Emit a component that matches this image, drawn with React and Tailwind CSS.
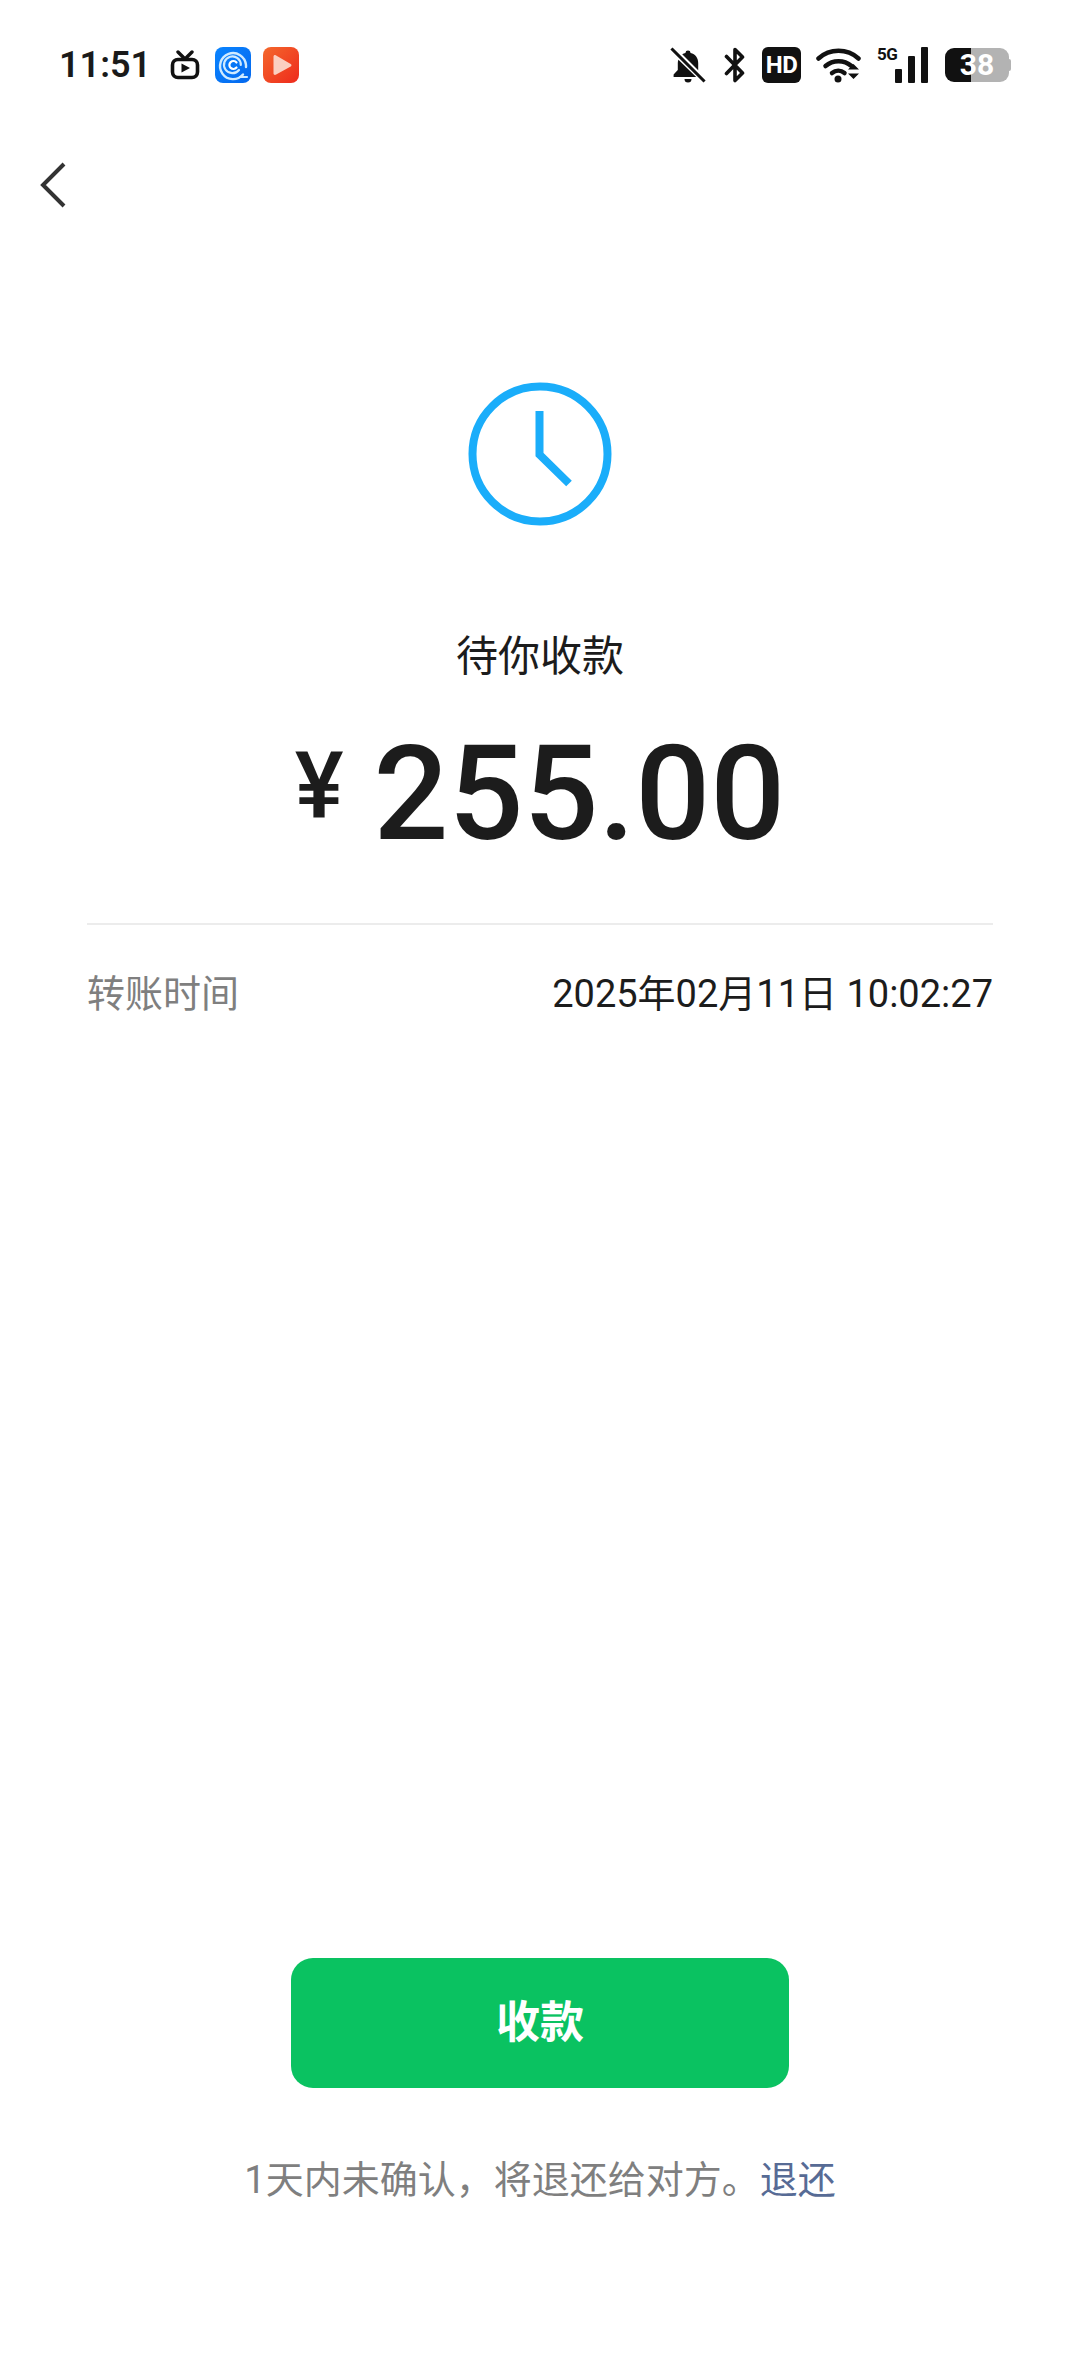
import React from "react";

function TvIcon() {
  return (
    <svg width="30" height="30" viewBox="0 0 30 30" className="ml-[32px]">
      <path d="M8 2l7 7 7-7" fill="none" stroke="#111" strokeWidth="3.4" strokeLinecap="round" strokeLinejoin="round" />
      <rect x="2.5" y="9.5" width="25" height="18" rx="5.5" fill="none" stroke="#111" strokeWidth="3.6" />
      <path d="M11.5 13.5v9l8.5-4.5z" fill="#111" />
    </svg>
  );
}

function BlueApp() {
  return (
    <svg width="36" height="36" viewBox="0 0 36 36" className="ml-[15px]">
      <defs>
        <linearGradient id="blueBg" x1="0" y1="0" x2="1" y2="1">
          <stop offset="0" stopColor="#0a84ff" />
          <stop offset="1" stopColor="#0468ee" />
        </linearGradient>
      </defs>
      <rect width="36" height="36" rx="8" fill="url(#blueBg)" />
      <path d="M28 27.5A13 13 0 1 1 31 18v2" fill="none" stroke="#cfeaff" strokeWidth="2.4" strokeLinecap="round" />
      <path d="M24 23a8.4 8.4 0 1 1 1.8-5" fill="none" stroke="#cfeaff" strokeWidth="2.2" strokeLinecap="round" />
      <path d="M21.5 15.5a4 4 0 1 0 0 5" fill="none" stroke="#fff" strokeWidth="2.2" strokeLinecap="round" />
      <path d="M25 30h7" stroke="#cfeaff" strokeWidth="2.2" strokeLinecap="round" />
    </svg>
  );
}

function RedApp() {
  return (
    <svg width="36" height="36" viewBox="0 0 36 36" className="ml-[12px]">
      <defs>
        <linearGradient id="redBg" x1="0" y1="0" x2="1" y2="1">
          <stop offset="0" stopColor="#f4682c" />
          <stop offset="1" stopColor="#ee2a1c" />
        </linearGradient>
      </defs>
      <rect width="36" height="36" rx="8" fill="url(#redBg)" />
      <path d="M10.5 9.5c0-1.2 1.2-1.9 2.2-1.3l15 8.8c1 .6 1 2 0 2.6l-15 8.2c-1 .5-2.2-.2-2.2-1.3z" fill="#fbcfc0" />
    </svg>
  );
}

function BellOff() {
  return (
    <svg width="36" height="36" viewBox="0 0 36 36">
      <path d="M18 3.5a2.6 2.6 0 0 1 2.6 2.4c4.8 1.2 7.6 5 7.6 10v7.4L12.2 7.3c1-.7 2.1-1.2 3.2-1.4A2.6 2.6 0 0 1 18 3.5z" fill="#111" />
      <path d="M8.4 12.8c-.4 1-.6 2-.6 3.1v7.2L3.6 27.6V30h22.6z" fill="#111" />
      <path d="M14.5 32h7a3.5 3.5 0 0 1-7 0z" fill="#111" />
      <path d="M2.5 2.5l31 31" stroke="#111" strokeWidth="3" strokeLinecap="square" />
    </svg>
  );
}

function Bluetooth() {
  return (
    <svg width="22" height="36" viewBox="0 0 22 36" className="ml-[18px]">
      <path d="M2.5 9.5l16 16.5-7.5 7.500V2.500l7.500 7.500L2.500 26.500" fill="none" stroke="#111" strokeWidth="3.600" strokeLinejoin="round" strokeLinecap="round" />
    </svg>
  );
}

function Wifi() {
  return (
    <svg width="46" height="36" viewBox="0 0 46 36" className="ml-[15px]">
      <path d="M2.500 11.500a30 30 0 0 1 40 0" fill="none" stroke="#111" strokeWidth="4.500" strokeLinecap="round" />
      <path d="M9.500 19a20 20 0 0 1 26 0" fill="none" stroke="#111" strokeWidth="4.500" strokeLinecap="round" />
      <path d="M16 26a10 10 0 0 1 12.500 0" fill="none" stroke="#111" strokeWidth="4.500" strokeLinecap="round" />
      <circle cx="22" cy="32" r="3.500" fill="#111" />
      <path d="M32 22.500h11l-5.500-5.500zM32 26.500h11l-5.500 5.500z" fill="#111" />
    </svg>
  );
}

function SignalBars() {
  return (
    <div className="relative ml-[15px] flex h-[36px] w-[51px] items-end justify-end gap-[6px]">
      <span className="absolute left-0 top-[-2px] font-['Roboto',sans-serif] text-[17px] leading-[18px] font-bold tracking-[-0.5px] text-[#111]">5G</span>
      <div className="h-[14px] w-[7px] rounded-[1px] bg-[#111]" />
      <div className="h-[27px] w-[7px] rounded-[1px] bg-[#111]" />
      <div className="h-[36px] w-[7px] rounded-[1px] bg-[#111]" />
    </div>
  );
}

function StatusBar() {
  return (
    <div className="flex h-[130px] items-center justify-between pl-[59px] pr-[69px]">
      <div className="flex items-center">
        <span className="w-[79px] text-[36px] leading-[44px] font-semibold text-[#1a1a1a]">11:51</span>
        <TvIcon />
        <BlueApp />
        <RedApp />
      </div>
      <div className="flex items-center">
        <BellOff />
        <Bluetooth />
        <div className="ml-[16px] flex h-[36px] w-[39px] items-center justify-center rounded-[6px] bg-[#111] text-[24px] leading-[36px] font-bold tracking-[-0.5px] text-white">HD</div>
        <Wifi />
        <SignalBars />
        <div className="ml-[17px] flex items-center">
          <div className="flex h-[34px] w-[64px] items-center justify-center rounded-[9px] bg-[linear-gradient(90deg,#111_40%,#b3b3b3_40%)] text-[30px] leading-[34px] font-bold text-white">38</div>
          <div className="h-[12px] w-[2px] rounded-r-[2px] bg-[#b3b3b3]" />
        </div>
      </div>
    </div>
  );
}

export default function App() {
  return (
    <div className="flex h-[2376px] w-[1080px] flex-col bg-white font-['Roboto','Noto_Sans_CJK_SC',sans-serif]">
      <StatusBar />

      {/* Back */}
      <div className="mt-[31px] h-[48px] pl-[38px]">
        <svg width="30" height="48" viewBox="0 0 30 48">
          <path d="M26 3L5 24l21 21" fill="none" stroke="#333" strokeWidth="4" />
        </svg>
      </div>

      {/* Status icon */}
      <div className="mt-[173px] flex justify-center">
        <svg width="144" height="144" viewBox="0 0 144 144" className="ml-[-1px]">
          <circle cx="72" cy="72" r="67.500" fill="none" stroke="#1aadfa" strokeWidth="8" />
          <path d="M71.500 29v43.500l29.500 29" fill="none" stroke="#1aadfa" strokeWidth="8" />
        </svg>
      </div>

      <p className="mt-[103px] text-center text-[42px] leading-[56px] text-[#1c1c1c]">待你收款</p>

      <div className="mt-[44px] flex h-[130px] items-start justify-center">
        <span className="mt-[8px] text-[92px] leading-[100px] font-medium text-[#1c1c1c]">¥</span>
        <span className="ml-[30px] text-[132px] leading-[130px] font-medium text-[#1c1c1c]">255.00</span>
      </div>

      <div className="mx-[87px] mt-[64px] h-[2px] bg-[#ececec]" />

      <div className="mx-[87px] mt-[43px] flex items-center justify-between text-[38px] leading-[52px]">
        <span className="text-[#7f7f7f]">转账时间</span>
        <span className="text-[#1c1c1c]">2025年02月11日 10:02:27</span>
      </div>

      <div className="flex-1" />

      <button className="mx-auto h-[130px] w-[498px] rounded-[22px] bg-[#0ac261] text-[44px] font-bold text-white">收款</button>

      <p className="mt-[66px] mb-[170px] text-center text-[38px] leading-[52px] text-[#7f7f7f]">
        1天内未确认，将退还给对方。<span className="text-[#576b95]">退还</span>
      </p>
    </div>
  );
}
